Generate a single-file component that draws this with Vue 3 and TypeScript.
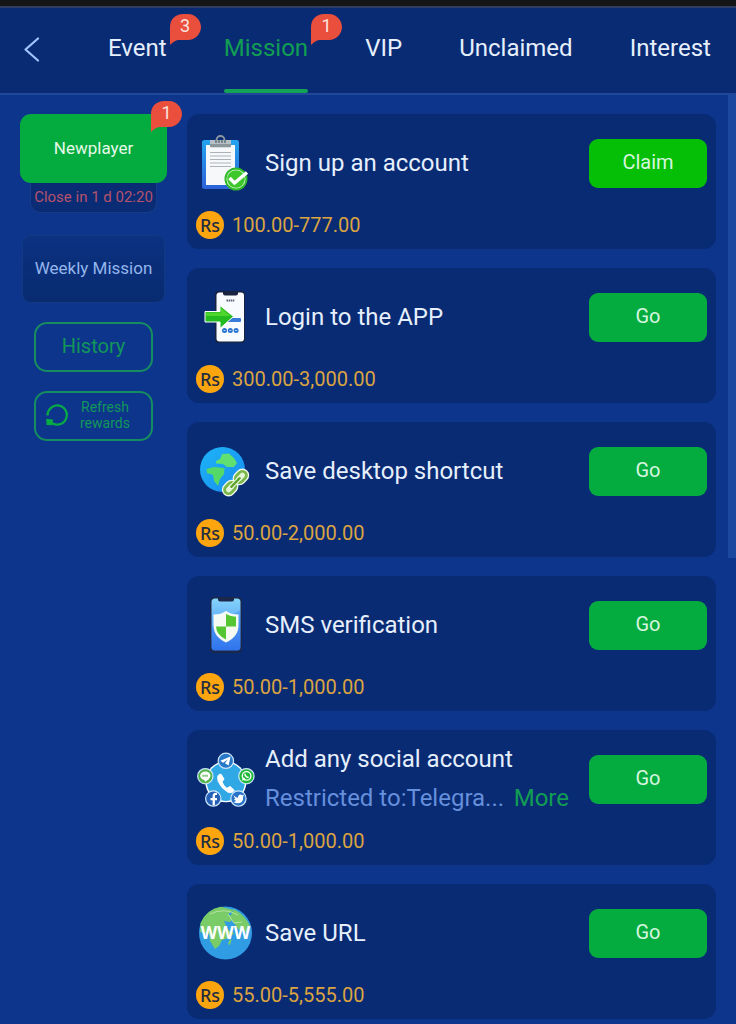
<script setup lang="ts">
import { ref } from 'vue'

interface Tab {
  label: string
  badge?: number
}

interface Mission {
  id: string
  title: string
  reward: string
  action: 'Claim' | 'Go'
  note?: string
}

const tabs: Tab[] = [
  { label: 'Event', badge: 3 },
  { label: 'Mission', badge: 1 },
  { label: 'VIP' },
  { label: 'Unclaimed' },
  { label: 'Interest' },
]

const active = ref('Mission')

const missions: Mission[] = [
  { id: 'signup', title: 'Sign up an account', reward: '100.00-777.00', action: 'Claim' },
  { id: 'login', title: 'Login to the APP', reward: '300.00-3,000.00', action: 'Go' },
  { id: 'shortcut', title: 'Save desktop shortcut', reward: '50.00-2,000.00', action: 'Go' },
  { id: 'sms', title: 'SMS verification', reward: '50.00-1,000.00', action: 'Go' },
  {
    id: 'social',
    title: 'Add any social account',
    reward: '50.00-1,000.00',
    action: 'Go',
    note: 'Restricted to:Telegra...',
  },
  { id: 'url', title: 'Save URL', reward: '55.00-5,555.00', action: 'Go' },
]
</script>

<template>
  <div class="page">
    <header class="topbar">
      <button class="back" type="button" aria-label="Back">
        <svg width="16" height="26" viewBox="0 0 16 26">
          <path d="M14 2.500 L1.500 13.500 L14 24.500" fill="none" stroke="#a3c4ff" stroke-width="2.2" stroke-linecap="round" stroke-linejoin="round" />
        </svg>
      </button>
      <nav class="tabs">
        <button
          v-for="tab in tabs"
          :key="tab.label"
          type="button"
          class="tab"
          :class="{ active: tab.label === active }"
          @click="active = tab.label"
        >
          {{ tab.label }}
          <span v-if="tab.badge" class="badge">
            <svg width="31" height="31" viewBox="0 0 31 31"><path d="M0 31V13C0 5 6 0 13 0H18C25 0 31 6 31 13S25 26 18 26H9Q5 26 0 31Z" fill="#ea4e3d" /></svg>
            <span class="count">{{ tab.badge }}</span>
          </span>
        </button>
      </nav>
    </header>

    <main class="content">
      <aside class="side">
        <button class="newplayer" type="button">
          Newplayer
          <span class="badge">
            <svg width="31" height="31" viewBox="0 0 31 31"><path d="M0 31V13C0 5 6 0 13 0H18C25 0 31 6 31 13S25 26 18 26H9Q5 26 0 31Z" fill="#ea4e3d" /></svg>
            <span class="count">1</span>
          </span>
        </button>
        <p class="closing">Close in 1 d 02:20</p>
        <button class="weekly" type="button">Weekly Mission</button>
        <button class="outline history" type="button">History</button>
        <button class="outline refresh" type="button">
          <svg width="24" height="24" viewBox="0 0 24 24">
            <path d="M2.600 12.500A9.600 9.600 0 1 1 6 19.400" fill="none" stroke="#07aa45" stroke-width="2.300" />
            <path d="M1.200 15.800L8 16.600L7 22.200L1.600 22Z" fill="#07aa45" />
          </svg>
          <span>Refresh<br />rewards</span>
        </button>
      </aside>

      <section class="list">
        <article v-for="m in missions" :key="m.id" class="card">
          <div class="row">
            <svg v-if="m.id === 'signup'" class="icon" viewBox="0 0 56 56">
              <defs>
                <linearGradient id="board" x1="0" y1="0" x2="0" y2="1"><stop offset="0" stop-color="#22a4ef" /><stop offset="1" stop-color="#2d62d8" /></linearGradient>
              </defs>
              <rect x="6" y="5" width="37" height="49" rx="2.500" fill="url(#board)" />
              <path d="M10 10H39V46L35 50H10Z" fill="#f7f8fa" />
              <path d="M14 17.500H35M14 21H35M14 24.500H35M14 28H35M14 31.500H35" stroke="#aeb2b8" stroke-width="1.200" />
              <circle cx="24.500" cy="5" r="4" fill="none" stroke="#8e98a0" stroke-width="1.800" />
              <path d="M14 5H35V11Q35 12.500 33.500 12.500H15.500Q14 12.500 14 11Z" fill="#b7c0c4" />
              <path d="M14 9H35V12H14Z" fill="#8c979c" />
              <path d="M19 6.500H30" stroke="#6f7b82" stroke-width="2.500" stroke-dasharray="2 1" />
              <circle cx="40" cy="44" r="11.500" fill="#2fb928" />
              <circle cx="40" cy="44" r="9.600" fill="#d8f5d0" />
              <circle cx="40" cy="44" r="8.800" fill="#3cc72b" />
              <path d="M33.500 43L38.500 48L51 37.500" fill="none" stroke="#fff" stroke-width="3.500" />
            </svg>

            <svg v-else-if="m.id === 'login'" class="icon" viewBox="0 0 56 56">
              <rect x="19" y="2" width="30" height="52" rx="4" fill="#18243f" />
              <rect x="20.500" y="3.500" width="27.500" height="49" rx="3" fill="#f8fbff" />
              <path d="M27 3H42V4.500Q42 6.500 40 6.500H29Q27 6.500 27 4.500Z" fill="#18243f" />
              <path d="M30.500 11.500H38.500" stroke="#596276" stroke-width="1.800" stroke-dasharray="1.500 .6" />
              <rect x="25" y="29" width="20" height="4" rx="1" fill="#387bd9" />
              <path d="M9 22.500H24V16.500L37.500 27.500L24 39.500V33H9Z" fill="#23bb20" stroke="#fff" stroke-width="1" />
              <path d="M10 23.500H25V19L34.500 27H10Z" fill="#4fd62c" />
              <g fill="#2873ce"><circle cx="28.500" cy="41.500" r="2.500" /><circle cx="34.300" cy="41.500" r="2.500" /><circle cx="40.100" cy="41.500" r="2.500" /></g>
              <path d="M27.500 41.500H29.500M33.300 41.500H35.300M39.100 41.500H41.100" stroke="#d7ebff" stroke-width=".8" />
            </svg>

            <svg v-else-if="m.id === 'shortcut'" class="icon" viewBox="0 0 56 56">
              <defs>
                <linearGradient id="ocean" x1="0" y1="0" x2="1" y2="1"><stop offset="0" stop-color="#1eb5f7" /><stop offset="1" stop-color="#178bf0" /></linearGradient>
              </defs>
              <circle cx="26.500" cy="26.500" r="22.500" fill="url(#ocean)" />
              <path d="M20 18L24 16L26 11L33 10.500L38 15L41 20L38 24L31 24L27 21L20 20.500Z" fill="#5fe070" />
              <path d="M10.500 26L18 24L28.500 25L28 31L24 36L22 43L18 38L17 32L11 30Z" fill="#54d968" />
              <g transform="translate(39.500 39.500) rotate(-46)" fill="none">
                <g stroke="#f1f8e9" stroke-width="5.500"><rect x="-14" y="-4" width="12.500" height="8" rx="4" /><rect x="1.500" y="-4" width="12.500" height="8" rx="4" /></g>
                <g stroke="#78b748" stroke-width="2.800"><rect x="-14" y="-4" width="12.500" height="8" rx="4" fill="#e3f4d5" /><rect x="1.500" y="-4" width="12.500" height="8" rx="4" fill="#e3f4d5" /></g>
                <path d="M-6 0H6" stroke="#edf8e3" stroke-width="4.500" stroke-linecap="round" />
                <path d="M-6 0H6" stroke="#5fa52e" stroke-width="2.400" stroke-linecap="round" />
              </g>
            </svg>

            <svg v-else-if="m.id === 'sms'" class="icon" viewBox="0 0 56 56">
              <defs>
                <linearGradient id="screen" x1="0" y1="0" x2="0" y2="1"><stop offset="0" stop-color="#85d5fb" /><stop offset="1" stop-color="#3277ef" /></linearGradient>
              </defs>
              <rect x="14" y="0" width="32" height="56" rx="4.500" fill="#1c2849" />
              <rect x="15.500" y="1.500" width="29" height="52" rx="3.500" fill="url(#screen)" />
              <path d="M22 0H38V2.500Q38 4.500 36 4.500H24Q22 4.500 22 2.500Z" fill="#1c2849" />
              <path d="M15.500 30L44.500 13V50Q44.500 53.500 41 53.500H19Q15.500 53.500 15.500 50Z" fill="#2c6eea" opacity=".3" />
              <path d="M30 14Q35 17.500 42.500 17.500V28Q42.500 40 30 45.500Q17.500 40 17.500 28V17.500Q25 17.500 30 14Z" fill="#f5fbf3" />
              <path d="M30 17V29.500H40V19.800Q35 19.800 30 17ZM30 29.500H20Q20.500 38 30 42.500Z" fill="#54c631" />
            </svg>

            <svg v-else-if="m.id === 'social'" class="icon" viewBox="-2 -2 60 60">
              <path d="M30 8L51.500 25L43.500 51H16.500L8.500 25Z" fill="#31a8e6" stroke="#fff" stroke-width="1.500" stroke-linejoin="round" />
              <circle cx="30" cy="31" r="22" fill="#fff" />
              <circle cx="30" cy="31" r="20.500" fill="#31a8e6" />
              <path d="M23 23Q20 25 22 31Q25 38 32 42Q37 44 39 40L34.500 36L31 38Q27 35 26 31L28 28L25 23Z" fill="#fff" stroke="#fff" stroke-width="1" stroke-linejoin="round" />
              <g stroke="#cfe6fb" stroke-width="1.300">
                <circle cx="30" cy="8.500" r="8.200" fill="#2878c9" />
                <circle cx="8" cy="25" r="8.200" fill="#51b54b" />
                <circle cx="52" cy="25" r="8.200" fill="#1fba38" />
                <circle cx="16.500" cy="49" r="8.200" fill="#2560b7" />
                <circle cx="43.500" cy="49" r="8.200" fill="#2873ca" />
              </g>
              <path d="M24 8.500L35 4L33 13.500L29 11L32 7L27 10.500Z" fill="#fff" />
              <ellipse cx="8" cy="24.500" rx="5.500" ry="4.500" fill="#fff" />
              <path d="M6 28L8 31L12 28Z" fill="#fff" />
              <path d="M5 24.500H11" stroke="#4fad4b" stroke-width="2" stroke-dasharray="1.300 .8" />
              <circle cx="52.200" cy="24.700" r="4.600" fill="none" stroke="#fff" stroke-width="1.400" />
              <path d="M49 26L47 30L51.500 28.500" fill="#fff" />
              <path d="M50.500 22.500Q50.500 26 54.500 26.500" fill="none" stroke="#fff" stroke-width="1.600" />
              <path d="M20.500 44H19Q17 44 17 46.500V56.500M13.500 49.500H20.500" fill="none" stroke="#fff" stroke-width="2.500" />
              <path d="M38 45.500Q40.500 48 43 48Q43 44.500 46 44.500L47.500 45.500L49.500 45L48.500 47Q49 54 42 54L38 53L41 51.500L38.500 50L40 49.500Z" fill="#fff" />
            </svg>

            <svg v-else class="icon" viewBox="0 0 56 56">
              <circle cx="29.500" cy="28" r="26.500" fill="#309ce3" />
              <path d="M4.500 18Q11 4 25 1.800L38 5L32 9L38 13L34 17L28 16L32 25L38 28L33 33L26 35L23 41L19 44L14 36L13 29L4 27Z" fill="#79cc67" />
              <path d="M38 4Q50 11 54 21L50 28L47 22L43 25L38 18L34 12Z" fill="#79cc67" />
              <path d="M34 34L35.500 35L34 40L32 39Z" fill="#79cc67" />
              <path d="M14 9Q28 2 42 10M32 9L38 18L46 17" fill="none" stroke="#b6e3a0" stroke-width="1" />
              <text x="29.500" y="34" text-anchor="middle" class="www">WWW</text>
            </svg>

            <div class="text">
              <h2>{{ m.title }}</h2>
              <div v-if="m.note" class="note">
                <span class="restricted">{{ m.note }}</span>
                <a href="#more">More</a>
              </div>
            </div>
            <button type="button" class="action" :class="{ claim: m.action === 'Claim' }">{{ m.action }}</button>
          </div>
          <div class="reward">
            <span class="coin">Rs</span>
            <span>{{ m.reward }}</span>
          </div>
        </article>
      </section>
      <div class="scrollbar"></div>
    </main>
  </div>
</template>

<style>
body {
  margin: 0;
  background: #0d358b;
}
</style>

<style scoped>
.page {
  min-height: 100vh;
  box-sizing: border-box;
  border-top: 6px solid #151515;
  background: #0d358b;
  font-family: Roboto, "Liberation Sans", sans-serif;
  color: #e6effc;
}
button {
  font-family: inherit;
  border: 0;
  padding: 0;
  margin: 0;
  cursor: pointer;
}
.topbar {
  display: flex;
  align-items: stretch;
  height: 85px;
  border-top: 2px solid #303d60;
  border-bottom: 2px solid #21479a;
  background: #082b74;
}
.back {
  width: 64px;
  padding-bottom: 4px;
  background: none;
  display: flex;
  align-items: center;
  justify-content: center;
}
.tabs {
  flex: 1;
  display: flex;
  justify-content: space-between;
  padding: 0 25px 0 44px;
}
.tab {
  position: relative;
  padding-bottom: 6px;
  background: none;
  color: #e6effc;
  font-size: 24px;
}
.tab.active {
  color: #129d53;
}
.tab.active::after {
  content: "";
  position: absolute;
  left: 0;
  right: 0;
  bottom: 0;
  height: 4px;
  border-radius: 2px;
  background: #14a256;
}
.badge {
  position: absolute;
  width: 31px;
  height: 31px;
}
.badge svg {
  display: block;
}
.count {
  position: absolute;
  inset: 0;
  font-size: 18px;
  line-height: 24px;
  text-align: center;
  color: #fbe3df;
}
.tab .badge {
  left: calc(100% + 3px);
  top: 6px;
}
.content {
  display: flex;
  align-items: flex-start;
}
.side {
  flex: 0 0 187px;
  box-sizing: border-box;
  padding: 19px 20px 0;
  display: flex;
  flex-direction: column;
  align-items: stretch;
}
.newplayer {
  position: relative;
  height: 69px;
  padding-bottom: 2px;
  border-radius: 11px;
  background: #04ab3f;
  color: #e6f9e8;
  font-size: 17px;
}
.newplayer .badge {
  right: -15px;
  top: -13px;
}
.closing {
  margin: 0 10px 22px;
  height: 30px;
  box-sizing: border-box;
  border: 1px solid #163c89;
  border-top: 0;
  border-radius: 0 0 10px 10px;
  background: #092c75;
  color: #b6526b;
  font-size: 15px;
  line-height: 29px;
  text-align: center;
  white-space: nowrap;
}
.weekly {
  margin: 0 2px 19px;
  height: 68px;
  padding-bottom: 2px;
  border: 1px solid #123984;
  border-radius: 9px;
  background: linear-gradient(#0b3180, #082b70);
  color: #94b6ed;
  font-size: 17px;
}
.outline {
  margin: 0 14px 19px;
  height: 50px;
  border: 2px solid #168d60;
  border-radius: 13px;
  background: none;
  color: #12965a;
}
.history {
  padding-bottom: 2px;
  font-size: 20px;
}
.refresh {
  display: flex;
  align-items: center;
  justify-content: flex-start;
  gap: 11px;
  padding: 0 0 2px 9px;
  font-size: 14px;
  line-height: 16px;
}
.list {
  flex: 1;
  min-width: 0;
  padding: 19px 12px 0 0;
  display: flex;
  flex-direction: column;
  gap: 19px;
}
.card {
  padding: 10px 9px;
  border-radius: 12px;
  background: #082b74;
  display: flex;
  flex-direction: column;
  gap: 9px;
}
.row {
  display: flex;
  align-items: center;
  min-height: 78px;
}
.icon {
  flex: none;
  width: 56px;
  height: 56px;
  overflow: visible;
}
.text {
  flex: 1;
  min-width: 0;
  margin: 0 20px 0 13px;
}
h2 {
  margin: 0;
  font-size: 24px;
  font-weight: 400;
  line-height: 39px;
  white-space: nowrap;
}
.note {
  display: flex;
  justify-content: space-between;
  font-size: 24px;
  line-height: 39px;
}
.restricted {
  white-space: nowrap;
  color: #668fdc;
}
.note a {
  color: #129d53;
  text-decoration: none;
}
.action {
  flex: none;
  width: 118px;
  height: 49px;
  padding-bottom: 2px;
  border-radius: 9px;
  background: #04ab3f;
  color: #d6f6df;
  font-size: 20px;
}
.action.claim {
  background: #04bf05;
}
.reward {
  display: flex;
  align-items: center;
  gap: 8px;
  color: #dba441;
  font-size: 20px;
  line-height: 28px;
}
.coin {
  width: 28px;
  height: 28px;
  border-radius: 50%;
  background: #fca50f;
  color: #222c42;
  font-family: "Noto Sans", sans-serif;
  font-size: 18px;
  font-weight: 500;
  text-align: center;
}
.www {
  font-family: "Noto Sans", sans-serif;
  font-size: 17px;
  font-weight: 700;
  fill: #fff;
}
.scrollbar {
  flex: 0 0 8px;
  height: 463px;
  background: #1c499f;
}
</style>
